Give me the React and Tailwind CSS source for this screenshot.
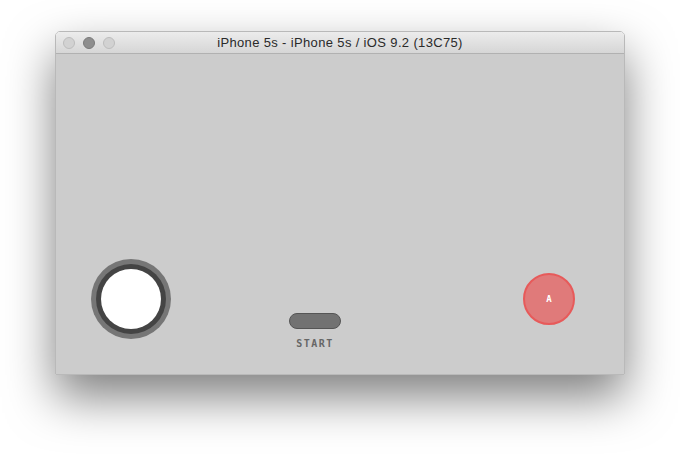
export default function App() {
  return (
    <div className="w-[680px] h-[454px] bg-white pt-[31px] pl-[55px]" style={{ fontFamily: '"Liberation Sans", Arial, sans-serif' }}>
      <div className="w-[570px] rounded-t-[5px] border border-[#b9b9b9] shadow-[0_22px_48px_rgba(0,0,0,0.5)] overflow-hidden">
        <div className="relative h-[22px] flex items-center justify-center border-b border-[#b1b1b1] bg-gradient-to-b from-[#ececec] to-[#d6d6d6]">
          <div className="absolute left-[7px] top-[5px] flex gap-[8px]">
            <div className="w-[12px] h-[12px] rounded-full bg-[#d2d2d2] border border-[#bdbdbd]" />
            <div className="w-[12px] h-[12px] rounded-full bg-[#8e8e8e] border border-[#7a7a7a]" />
            <div className="w-[12px] h-[12px] rounded-full bg-[#d2d2d2] border border-[#bdbdbd]" />
          </div>
          <span className="text-[13px] tracking-[0.35px] text-[#2a2a2a] leading-none">iPhone 5s - iPhone 5s / iOS 9.2 (13C75)</span>
        </div>
        <div className="h-[320px] bg-[#cccccc] flex flex-col justify-end pb-[35px]">
          <div className="h-[80px] flex items-start">
            <div className="ml-[35px] shrink-0 w-[80px] h-[80px] rounded-full bg-[#767676] flex items-center justify-center">
              <div className="w-[70px] h-[70px] rounded-full bg-[#444444] flex items-center justify-center">
                <div className="w-[60px] h-[60px] rounded-full bg-white" />
              </div>
            </div>
            <div className="ml-[118px] mt-[54px] shrink-0 flex flex-col items-center">
              <div className="shrink-0 w-[52px] h-[16px] rounded-full bg-[#727272] border border-[#555555]" />
              <span className="shrink-0 mt-[10px] text-[10px] font-bold tracking-[1.5px] leading-none text-[#666666]" style={{ fontFamily: '"DejaVu Sans Mono", monospace' }}>START</span>
            </div>
            <div className="ml-[182px] mt-[14px] shrink-0 w-[52px] h-[52px] rounded-full bg-[#e07a7a] border-2 border-[#e75a5a] flex items-center justify-center">
              <span className="text-[9px] font-bold text-white leading-none" style={{ fontFamily: '"DejaVu Sans Mono", monospace' }}>A</span>
            </div>
          </div>
        </div>
      </div>
    </div>
  );
}
